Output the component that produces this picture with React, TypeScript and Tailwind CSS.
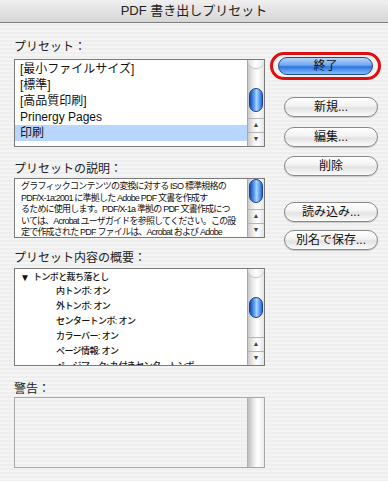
import React from "react";

const font = { fontFamily: '"Liberation Sans", "Noto Sans CJK JP", sans-serif' };

const presets = ["[最小ファイルサイズ]", "[標準]", "[高品質印刷]", "Prinergy Pages", "印刷"];

const descLines = [
  "グラフィックコンテンツの変換に対する ISO 標準規格の",
  "PDF/X-1a:2001 に準拠した Adobe PDF 文書を作成す",
  "るために使用します。PDF/X-1a 準拠の PDF 文書作成につ",
  "いては、Acrobat ユーザガイドを参照してください。この設",
  "定で作成された PDF ファイルは、Acrobat および Adobe",
];

const summaryItems = [
  "内トンボ: オン",
  "外トンボ: オン",
  "センタートンボ: オン",
  "カラーバー: オン",
  "ページ情報: オン",
  "ページマーク: 丸付きセンタートンボ",
];

// Aqua スクロールバー
function Scrollbar({ before, thumb, capTop }: { before: number; thumb: number; capTop?: boolean }) {
  return (
    <div className="flex h-full w-[17px] shrink-0 flex-col border-l border-[#a8a8a8] bg-[linear-gradient(90deg,#c9c9c9,#efefef_35%,#ffffff_60%,#e4e4e4)]">
      {capTop && (
        <div className="h-[8px] shrink-0 rounded-b-full bg-[linear-gradient(90deg,#e0e0e0,#ffffff_50%,#e8e8e8)] shadow-[0_1px_1px_#bdbdbd]" />
      )}
      <div style={{ height: before }} className="shrink-0" />
      {/* つまみ */}
      <div
        style={{ height: thumb }}
        className="mx-[1px] shrink-0 rounded-full border border-[#1d3f93] bg-[linear-gradient(90deg,#174cb5,#4f93ea_30%,#a9d3ff_55%,#5a9cf0_80%,#2a64cc)]"
      />
      <div className="flex-1" />
      {/* 矢印 */}
      <div className="flex h-[14px] shrink-0 items-center justify-center border-t border-[#b5b5b5] text-[7px] text-[#444]">▲</div>
      <div className="flex h-[14px] shrink-0 items-center justify-center border-t border-[#b5b5b5] text-[7px] text-[#444]">▼</div>
    </div>
  );
}

function AquaButton({ label }: { label: string }) {
  return (
    <div className="ml-[14px] flex h-[20px] w-[94px] items-center justify-center rounded-full border border-[#888] bg-[linear-gradient(180deg,#ffffff,#f2f2f2_45%,#e2e2e2_55%,#fbfbfb)] text-[12px] text-[#111] shadow-[0_1px_1px_#c8c8c8]">
      {label}
    </div>
  );
}

export default function App() {
  return (
    <div
      style={font}
      className="flex h-[481px] w-[388px] flex-col overflow-hidden bg-[repeating-linear-gradient(180deg,#eeeeee_0px,#eeeeee_2px,#f4f4f4_2px,#f4f4f4_4px)] text-[#111]"
    >
      {/* タイトルバー */}
      <div className="flex h-[23px] shrink-0 items-center justify-center rounded-t-[5px] border-b border-[#7d7d7d] bg-[linear-gradient(180deg,#f0f0f0,#e2e2e2_50%,#d6d6d6)] text-[13px] text-[#222]">
        PDF 書き出しプリセット
      </div>

      <div className="flex">
        {/* 左カラム */}
        <div className="ml-[14px] flex w-[251px] flex-col">
          <div className="mt-[17px] h-[14px] text-[12px] leading-[14px] text-[#222]">プリセット：</div>
          <div className="mt-[5px] flex h-[88px] border border-[#7a7a7a] bg-white">
            <div className="flex-1 pt-[1px]">
              {presets.map((p, i) => (
                <div
                  key={p}
                  className={
                    "h-[16px] pl-[5px] text-[12px] leading-[16px] " + (i === 4 ? "bg-[#b8d6fe]" : "")
                  }
                >
                  {p}
                </div>
              ))}
            </div>
            <Scrollbar before={20} thumb={24} capTop />
          </div>

          <div className="mt-[15px] h-[14px] text-[12px] leading-[14px] text-[#222]">プリセットの説明：</div>
          <div className="mt-[2px] flex h-[60px] border border-[#7a7a7a] bg-white">
            <div className="flex-1 overflow-hidden pl-[6px] pt-[2px]">
              {descLines.map((l) => (
                <div key={l} className="h-[11.5px] whitespace-nowrap text-[9px] leading-[11.5px] tracking-[-0.8px]">
                  {l}
                </div>
              ))}
            </div>
            <Scrollbar before={0} thumb={24} />
          </div>

          <div className="mt-[13px] h-[14px] text-[12px] leading-[14px] text-[#222]">プリセット内容の概要：</div>
          <div className="mt-[3px] flex h-[98px] border border-[#7a7a7a] bg-white">
            <div className="flex-1 overflow-hidden pt-[3px]">
              <div className="flex h-[12px] items-center text-[9px] font-medium tracking-[-0.6px]">
                <span className="ml-[5px] w-[13px] text-[10px] leading-none">▼</span>
                <span>トンボと裁ち落とし</span>
              </div>
              {summaryItems.map((s) => (
                <div
                  key={s}
                  className="h-[15px] whitespace-nowrap pl-[41px] text-[9px] font-medium leading-[15px] tracking-[-0.6px]"
                >
                  {s}
                </div>
              ))}
            </div>
            <Scrollbar before={20} thumb={21} capTop />
          </div>

          <div className="mt-[16px] h-[14px] text-[12px] leading-[14px] text-[#222]">警告：</div>
          <div className="mt-[1px] flex h-[71px] border border-[#a8a8a8]">
            <div className="flex-1" />
            <div className="w-[17px] border-l border-[#b0b0b0] bg-[linear-gradient(90deg,#bdbdbd,#e8e8e8_35%,#ffffff_60%,#ececec)]" />
          </div>
        </div>

        {/* 右カラム：ボタン */}
        <div className="ml-[5px] flex flex-col">
          <div className="mt-[29px] flex h-[28px] w-[111px] items-center justify-center rounded-full border-[3px] border-[#dc1010]">
            <div className="flex h-[18px] w-[95px] items-center justify-center rounded-full border border-[#27478f] bg-[linear-gradient(180deg,#b6d6fb,#6ea7ef_45%,#2f74dd_55%,#7fc0ff)] text-[12px] text-[#111]">
              終了
            </div>
          </div>
          <div className="mt-[17px]"><AquaButton label="新規..." /></div>
          <div className="mt-[10px]"><AquaButton label="編集..." /></div>
          <div className="mt-[9px]"><AquaButton label="削除" /></div>
          <div className="mt-[26px]"><AquaButton label="読み込み..." /></div>
          <div className="mt-[8px]"><AquaButton label="別名で保存..." /></div>
        </div>
      </div>
    </div>
  );
}
